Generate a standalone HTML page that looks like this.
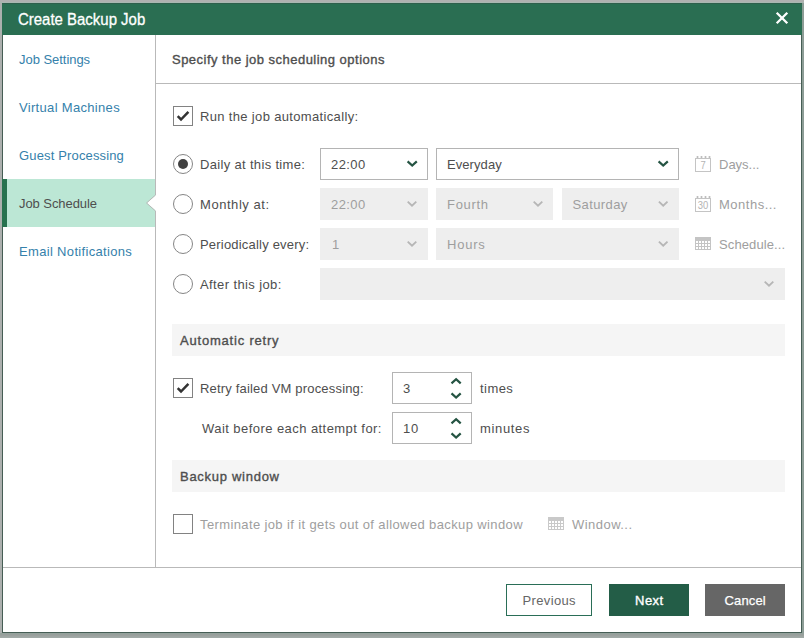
<!DOCTYPE html>
<html lang="en">
<head>
<meta charset="utf-8">
<title>Create Backup Job</title>
<style>
html,body{margin:0;padding:0;}
body{width:804px;height:638px;overflow:hidden;position:relative;background:#b0b1b0;
  font-family:"Liberation Sans",Arial,sans-serif;font-size:13px;color:#444;}
.abs{position:absolute;}
#shade{left:0;top:2px;width:804px;height:636px;background:linear-gradient(to bottom,#a9b8b1 0,#a9b8b1 1px,#acb0ae 1px,#acb0ae 631px,#92a29b 631px,#969f9b 632.5px,#9ba19e 633.5px,#9ea6a3 634.5px,#a2aca8 636px);}
#shadeR{left:802px;top:3px;width:2px;height:630px;background:#8d9d96;}
#dlg{left:2px;top:3px;width:798px;height:628px;border:1px solid #465e55;background:#fff;}
#title{left:2px;top:3px;width:800px;height:31px;background:#2a6e52;border-top:1px solid #2f5f4c;}
#title span{position:absolute;left:15.5px;top:5px;line-height:22px;font-size:16px;color:#fff;white-space:nowrap;-webkit-text-stroke:0.3px #fff;transform:scaleX(0.935);transform-origin:0 0;}
.t{position:absolute;white-space:nowrap;line-height:20px;height:20px;}
.nav{color:#3581ab;}
.lbl{color:#4e4e4e;}
.dis{color:#9e9e9e;}
.b{font-weight:normal;-webkit-text-stroke-width:0.36px;}
.sec{left:172px;width:613px;height:32px;background:#f5f5f5;}
.cb{width:18px;height:18px;border:1px solid #828282;background:#fff;left:173px;}
.rb{width:18px;height:18px;border:1px solid #858585;border-radius:50%;background:#fff;left:173px;}
.dd{height:30px;border:1px solid #b4b4b4;background:#fff;}
.ddd{height:32px;background:#eee;}
#ov{left:0;top:0;pointer-events:none;}
</style>
</head>
<body>
<div class="abs" id="shade"></div>
<div class="abs" id="shadeR"></div>
<div class="abs" id="dlg"></div>
<div class="abs" id="title"><span>Create Backup Job</span></div>

<!-- sidebar active item -->
<div class="abs" style="left:3px;top:179px;width:153px;height:48px;background:#bce7d5;"></div>
<div class="abs" style="left:2px;top:179px;width:5px;height:48px;background:#28724f;"></div>
<svg class="abs" style="left:140px;top:35px" width="20" height="533" viewBox="0 0 20 533">
  <path d="M16 0 V160 L7 168 L16 176 V533 H20 V0 Z" fill="#fff"/>
  <path d="M15.5 0 V160 L6.5 168 L15.5 176 V532" stroke="#b9b9b9" stroke-width="1" fill="none"/>
</svg>

<!-- header + footer lines -->
<div class="abs" style="left:156px;top:83px;width:645px;height:1px;background:#b9b9b9"></div>
<div class="abs" style="left:3px;top:567px;width:798px;height:1px;background:#b9b9b9"></div>

<!-- checkboxes and radios -->
<div class="abs cb" style="top:106px"></div>
<div class="abs cb" style="top:378px"></div>
<div class="abs cb" style="top:514px"></div>
<div class="abs rb" style="top:154px"></div>
<div class="abs" style="left:178px;top:159px;width:10px;height:10px;border-radius:50%;background:#414141"></div>
<div class="abs rb" style="top:194px"></div>
<div class="abs rb" style="top:234px"></div>
<div class="abs rb" style="top:274px"></div>

<!-- dropdown boxes -->
<div class="abs dd" style="left:320px;top:148px;width:106px"></div>
<div class="abs dd" style="left:436px;top:148px;width:241px"></div>
<div class="abs ddd" style="left:320px;top:188px;width:108px"></div>
<div class="abs ddd" style="left:436px;top:188px;width:117px"></div>
<div class="abs ddd" style="left:562px;top:188px;width:117px"></div>
<div class="abs ddd" style="left:320px;top:228px;width:108px"></div>
<div class="abs ddd" style="left:436px;top:228px;width:243px"></div>
<div class="abs ddd" style="left:320px;top:268px;width:465px"></div>
<div class="abs dd" style="left:392px;top:372px;width:78px"></div>
<div class="abs dd" style="left:392px;top:412px;width:78px"></div>

<!-- section bars -->
<div class="abs sec" style="top:324px"></div>
<div class="abs sec" style="top:460px"></div>

<!-- buttons -->
<div class="abs" style="left:506px;top:584px;width:84px;height:30px;border:1px solid #2a6e57;background:#fff"></div>
<div class="abs" style="left:609px;top:584px;width:80px;height:32px;background:#235d47"></div>
<div class="abs" style="left:705px;top:584px;width:80px;height:32px;background:#666"></div>

<!-- text -->
<div class="t nav" style="left:19px;top:50px;letter-spacing:-0.04px;">Job Settings</div>
<div class="t nav" style="left:19px;top:98px;letter-spacing:0.32px;">Virtual Machines</div>
<div class="t nav" style="left:19px;top:146px;letter-spacing:0.15px;">Guest Processing</div>
<div class="t lbl" style="left:19px;top:194px;letter-spacing:-0.07px;">Job Schedule</div>
<div class="t nav" style="left:19px;top:242px;letter-spacing:0.33px;">Email Notifications</div>
<div class="t lbl b" style="left:172px;top:50px;letter-spacing:0.48px;">Specify the job scheduling options</div>
<div class="t lbl" style="left:200px;top:107px;letter-spacing:0.34px;">Run the job automatically:</div>
<div class="t lbl" style="left:200px;top:155px;letter-spacing:0.33px;">Daily at this time:</div>
<div class="t lbl" style="left:200px;top:195px;letter-spacing:0.55px;">Monthly at:</div>
<div class="t lbl" style="left:200px;top:235px;letter-spacing:0.2px;">Periodically every:</div>
<div class="t lbl" style="left:200px;top:275px;letter-spacing:0.39px;">After this job:</div>
<div class="t lbl" style="left:331px;top:155px;letter-spacing:0.43px;">22:00</div>
<div class="t lbl" style="left:447px;top:155px;letter-spacing:0.07px;">Everyday</div>
<div class="t dis" style="left:331px;top:195px;letter-spacing:0.43px;">22:00</div>
<div class="t dis" style="left:447px;top:195px;letter-spacing:0.7px;">Fourth</div>
<div class="t dis" style="left:572.5px;top:195px;letter-spacing:0.39px;">Saturday</div>
<div class="t dis" style="left:332px;top:235px;">1</div>
<div class="t dis" style="left:447px;top:235px;letter-spacing:0.77px;">Hours</div>
<div class="t dis" style="left:719px;top:155px;">Days...</div>
<div class="t dis" style="left:719px;top:195px;letter-spacing:0.5px;">Months...</div>
<div class="t dis" style="left:719px;top:235px;letter-spacing:0.11px;">Schedule...</div>
<div class="t lbl b" style="left:180px;top:331px;letter-spacing:0.8px;">Automatic retry</div>
<div class="t lbl" style="left:200px;top:379px;letter-spacing:0.18px;">Retry failed VM processing:</div>
<div class="t lbl" style="left:403px;top:379px;">3</div>
<div class="t lbl" style="left:480px;top:379px;letter-spacing:0.45px;">times</div>
<div class="t lbl" style="left:202px;top:419px;letter-spacing:0.44px;">Wait before each attempt for:</div>
<div class="t lbl" style="left:403px;top:419px;letter-spacing:0.7px;">10</div>
<div class="t lbl" style="left:480px;top:419px;letter-spacing:0.65px;">minutes</div>
<div class="t lbl b" style="left:180px;top:467px;letter-spacing:0.72px;">Backup window</div>
<div class="t dis" style="left:200px;top:515px;letter-spacing:0.38px;">Terminate job if it gets out of allowed backup window</div>
<div class="t dis" style="left:572px;top:515px;letter-spacing:0.46px;">Window...</div>
<div class="t lbl" style="left:522.5px;top:591px;letter-spacing:0.36px;color:#666;">Previous</div>
<div class="t b" style="left:635px;top:591px;letter-spacing:0.5px;color:#fff;">Next</div>
<div class="t " style="left:724.5px;top:591px;letter-spacing:0.15px;color:#fff;-webkit-text-stroke-width:0.25px;">Cancel</div>

<!-- icons overlay -->
<svg class="abs" id="ov" width="804" height="638" viewBox="0 0 804 638" fill="none">
  <path d="M776.7 12.7 L787.3 23.3 M787.3 12.7 L776.7 23.3" stroke="#fff" stroke-width="2.3"/>
  <g stroke="#333" stroke-width="2.5">
    <path d="M177.7 116.2 L181 119.5 L188.4 111.9"/>
    <path d="M177.7 388.2 L181 391.5 L188.4 383.9"/>
  </g>
  <g stroke="#255443" stroke-width="2.2">
    <path d="M407.59999999999997 161.4 L412.2 165.6 L416.8 161.4"/>
    <path d="M658.6 161.4 L663.2 165.6 L667.8000000000001 161.4"/>
    <path d="M451.5 383.40000000000003 L456.1 379.2 L460.70000000000005 383.40000000000003"/>
    <path d="M451.5 393.4 L456.1 397.6 L460.70000000000005 393.4"/>
    <path d="M451.5 423.40000000000003 L456.1 419.2 L460.70000000000005 423.40000000000003"/>
    <path d="M451.5 433.4 L456.1 437.6 L460.70000000000005 433.4"/>
  </g>
  <g stroke="#b6b6b6" stroke-width="1.9">
    <path d="M407.7 201.6 L412 205.6 L416.3 201.6"/>
    <path d="M533.7 201.6 L538 205.6 L542.3 201.6"/>
    <path d="M658.9000000000001 201.6 L663.2 205.6 L667.5 201.6"/>
    <path d="M407.7 241.6 L412 245.6 L416.3 241.6"/>
    <path d="M658.9000000000001 241.6 L663.2 245.6 L667.5 241.6"/>
    <path d="M764.7 281.6 L769 285.6 L773.3 281.6"/>
  </g>
  <rect x="695.5" y="158.5" width="15" height="13" fill="#fff" stroke="#c4c4c4"/><path d="M697.5 156 v2 M701.5 156 v2 M705.5 156 v2 M709.5 156 v2" stroke="#bdbdbd" stroke-width="1.7"/><text transform="translate(703.1,169) scale(0.86,1)" font-size="11" text-anchor="middle" fill="#b4b4b4" stroke="none" font-family="Liberation Sans, Arial, sans-serif">7</text>
  <rect x="695.5" y="198.5" width="15" height="13" fill="#fff" stroke="#c4c4c4"/><path d="M697.5 196 v2 M701.5 196 v2 M705.5 196 v2 M709.5 196 v2" stroke="#bdbdbd" stroke-width="1.7"/><text transform="translate(703.1,209) scale(0.86,1)" font-size="11" text-anchor="middle" fill="#b4b4b4" stroke="none" font-family="Liberation Sans, Arial, sans-serif">30</text>
  <rect x="695" y="237" width="16" height="13" fill="#c4c4c4"/><g fill="#fff"><rect x="696" y="241" width="2" height="2"/><rect x="699" y="241" width="2" height="2"/><rect x="702" y="241" width="2" height="2"/><rect x="705" y="241" width="2" height="2"/><rect x="708" y="241" width="2" height="2"/><rect x="696" y="244" width="2" height="2"/><rect x="699" y="244" width="2" height="2"/><rect x="702" y="244" width="2" height="2"/><rect x="705" y="244" width="2" height="2"/><rect x="708" y="244" width="2" height="2"/><rect x="696" y="247" width="2" height="2"/><rect x="699" y="247" width="2" height="2"/><rect x="702" y="247" width="2" height="2"/><rect x="705" y="247" width="2" height="2"/><rect x="708" y="247" width="2" height="2"/></g>
  <rect x="548" y="517" width="16" height="13" fill="#c9c9c9"/><g fill="#fff"><rect x="549" y="521" width="2" height="2"/><rect x="552" y="521" width="2" height="2"/><rect x="555" y="521" width="2" height="2"/><rect x="558" y="521" width="2" height="2"/><rect x="561" y="521" width="2" height="2"/><rect x="549" y="524" width="2" height="2"/><rect x="552" y="524" width="2" height="2"/><rect x="555" y="524" width="2" height="2"/><rect x="558" y="524" width="2" height="2"/><rect x="561" y="524" width="2" height="2"/><rect x="549" y="527" width="2" height="2"/><rect x="552" y="527" width="2" height="2"/><rect x="555" y="527" width="2" height="2"/><rect x="558" y="527" width="2" height="2"/><rect x="561" y="527" width="2" height="2"/></g>
</svg>
</body>
</html>
